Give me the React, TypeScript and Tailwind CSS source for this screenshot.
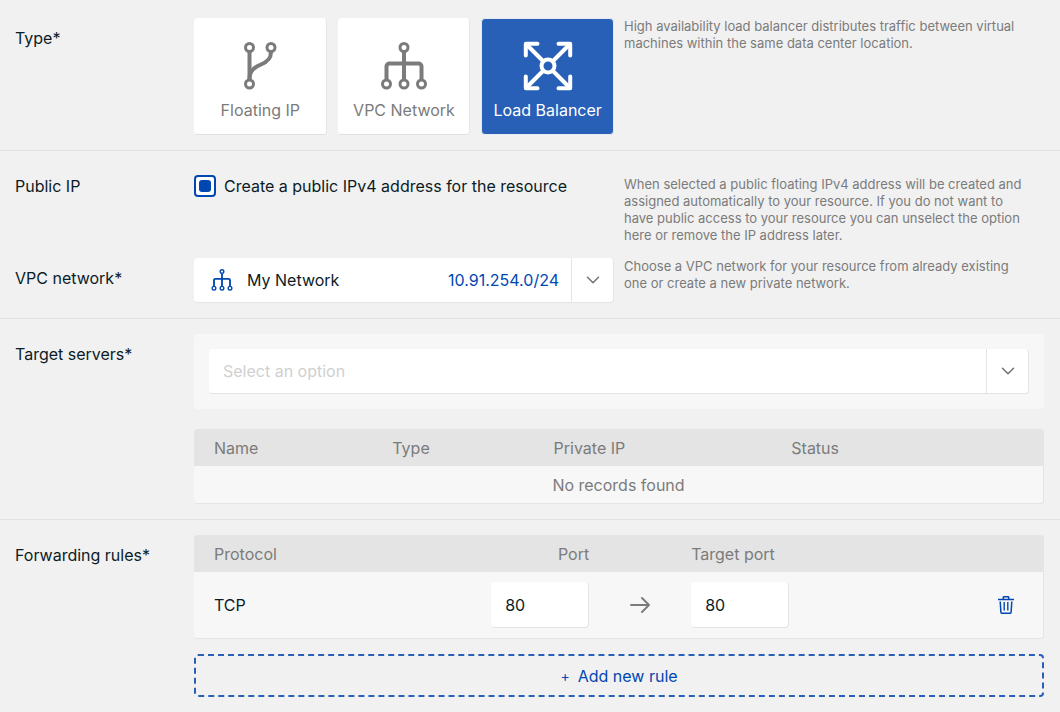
import { useState } from 'react'
import type { ReactNode, SelectHTMLAttributes } from 'react'
import { ChevronDown } from 'lucide-react'
import clsx from 'clsx'

interface IconProps {
  className?: string
}

const FloatingIpIcon = ({ className }: IconProps) => (
  <svg className={className} viewBox="0 0 48 48" fill="none" stroke="currentColor" aria-hidden="true">
    <g strokeWidth="4">
      <path d="M13.5 10v27" />
      <path d="M35 10c0 7-4 10-10 12.5S13.5 28 13.5 37" />
    </g>
    <g strokeWidth="3">
      <circle cx="13.5" cy="5.5" r="4" />
      <circle cx="35" cy="5.5" r="4" />
      <circle cx="13.5" cy="42" r="4" />
    </g>
  </svg>
)

const NetworkIcon = ({ className }: IconProps) => (
  <svg className={className} viewBox="0 0 48 48" fill="none" stroke="currentColor" aria-hidden="true">
    <g strokeWidth="4">
      <path d="M24 10v27" />
      <path d="M6.5 37V24.5a3 3 0 0 1 3-3h29a3 3 0 0 1 3 3V37" />
    </g>
    <g strokeWidth="3">
      <circle cx="24" cy="5.5" r="4" />
      <circle cx="6.5" cy="42" r="4" />
      <circle cx="24" cy="42" r="4" />
      <circle cx="41.5" cy="42" r="4" />
    </g>
  </svg>
)

const LoadBalancerIcon = ({ className }: IconProps) => (
  <svg
    className={className}
    viewBox="0 0 48 48"
    fill="none"
    stroke="currentColor"
    strokeWidth="4"
    strokeLinecap="round"
    strokeLinejoin="round"
    overflow="visible"
    aria-hidden="true"
  >
    <circle cx="24" cy="24" r="6.5" />
    <path d="M13.5 1.8H1.8v11.7M34.5 1.8h11.7v11.7M13.5 46.2H1.8V34.5M34.5 46.2h11.7V34.5" />
    <path d="m3 3 16 16M45 3 29 19M3 45l16-16M45 45 29 29" />
  </svg>
)

const ArrowIcon = () => (
  <svg
    className="h-4 w-5"
    viewBox="0 0 20 16"
    fill="none"
    stroke="currentColor"
    strokeWidth="1.9"
    strokeLinecap="round"
    strokeLinejoin="round"
    aria-hidden="true"
  >
    <path d="M1 8h18M12 1l7 7-7 7" />
  </svg>
)

const TrashIcon = () => (
  <svg className="h-[18px] w-4" viewBox="0 0 16 18" fill="none" stroke="currentColor" aria-hidden="true">
    <path d="M0 3.5h16" strokeWidth="1.6" />
    <path d="M5.3 3V1.4a.6.6 0 0 1 .6-.6h4.2a.6.6 0 0 1 .6.6V3" strokeWidth="1.5" />
    <path d="m2.2 5.5.7 10.8a.9.9 0 0 0 .9.9h8.4a.9.9 0 0 0 .9-.9l.7-10.8" strokeWidth="1.5" />
    <path d="M6.2 6v8.5M9.8 6v8.5" strokeWidth="1.4" />
  </svg>
)

const resourceTypes = [
  { id: 'floating-ip', name: 'Floating IP', Icon: FloatingIpIcon },
  { id: 'vpc', name: 'VPC Network', Icon: NetworkIcon },
  { id: 'load-balancer', name: 'Load Balancer', Icon: LoadBalancerIcon },
]

const Section = ({ children, className = '' }: { children: ReactNode; className?: string }) => (
  <section className={`border-b border-[#e2e2e2] pr-4 pb-[15px] pl-[15px] ${className}`}>{children}</section>
)

const rowStyles = 'grid grid-cols-[169px_minmax(0,1fr)_minmax(0,1fr)] gap-x-[10px] gap-y-[14px]'
const wideRowStyles = 'grid grid-cols-[169px_minmax(0,1fr)] gap-x-[10px]'
const labelStyles = 'block pt-2 text-base'

const Help = ({ children, className = '' }: { children: ReactNode; className?: string }) => (
  <p className={`pr-4 text-[13px] leading-[17px] text-[#7b7b7b] ${className}`}>{children}</p>
)

interface SelectProps extends SelectHTMLAttributes<HTMLSelectElement> {
  icon?: ReactNode
  detail?: string
}

const Select = ({ icon, detail, className = '', children, ...props }: SelectProps) => (
  <div className="flex h-[45px] items-center rounded border-r border-b border-[#e4e4e4] bg-white">
    {icon}
    <select className={`h-full min-w-0 flex-1 appearance-none bg-transparent pl-[14px] outline-none ${className}`} {...props}>
      {children}
    </select>
    {detail && <span className="pr-3 text-[#0047b3]">{detail}</span>}
    <span className="flex h-full w-[42px] items-center justify-center border-l border-[#e4e4e4] text-[#777]">
      <ChevronDown size={22} strokeWidth={1.75} />
    </span>
  </div>
)

const tableStyles =
  'w-full table-fixed border-separate border-spacing-0 overflow-hidden rounded-[3px] border-r border-b border-[#e4e4e4] bg-[#f7f7f7] text-left'
const headStyles = 'h-[37px] bg-[#e4e4e4] text-[#7b7b7b] [&_th]:font-normal'
const portStyles = 'block h-[46px] w-full rounded-sm border-r border-b border-[#e4e4e4] bg-white px-[14px] outline-none'

export default function App() {
  const [type, setType] = useState('load-balancer')
  const [publicIp, setPublicIp] = useState(true)

  return (
    <form className="min-h-screen bg-[#f1f1f1] font-['Inter',sans-serif] text-base text-[#0b1c27]">
      <Section className="pt-[18px]">
        <div className={rowStyles}>
          <span id="type-label" className={labelStyles}>
            Type*
          </span>
          <div role="radiogroup" aria-labelledby="type-label" className="grid grid-cols-3 gap-[11px]">
            {resourceTypes.map(({ id, name, Icon }) => (
              <label
                key={id}
                className={clsx(
                  'relative flex cursor-pointer flex-col items-center gap-2 rounded border pt-[23px] pb-3 whitespace-nowrap',
                  type === id
                    ? 'border-[#e6ebf3] bg-[#2860b7] text-white'
                    : 'border-t-white border-r-[#e6e6e6] border-b-[#e0e0e0] border-l-white bg-white text-[#7b7b7b]'
                )}
              >
                <input
                  type="radio"
                  name="type"
                  className="sr-only"
                  checked={type === id}
                  onChange={() => setType(id)}
                />
                <Icon className="size-12" />
                {name}
              </label>
            ))}
          </div>
          <Help>
            High availability load balancer distributes traffic between virtual machines within the same data center
            location.
          </Help>
        </div>
      </Section>

      <Section className="pt-[15px]">
        <div className={rowStyles}>
          <span className={labelStyles}>Public IP</span>
          <label className="flex items-center gap-2 self-start pt-2">
            <input
              type="checkbox"
              className="grid size-[22px] shrink-0 appearance-none place-content-center rounded border-2 border-[#0047b3] bg-white before:size-3 before:rounded-[3px] checked:before:bg-[#0047b3]"
              checked={publicIp}
              onChange={(e) => setPublicIp(e.target.checked)}
            />
            Create a public IPv4 address for the resource
          </label>
          <Help className="pt-[10px]">
            When selected a public floating IPv4 address will be created and assigned automatically to your resource. If
            you do not want to have public access to your resource you can unselect the option here or remove the IP
            address later.
          </Help>

          <label htmlFor="network" className={labelStyles}>
            VPC network*
          </label>
          <Select
            id="network"
            icon={<NetworkIcon className="ml-[17px] size-[22px] shrink-0 text-[#0047b3]" />}
            detail="10.91.254.0/24"
          >
            <option>My Network</option>
          </Select>
          <Help>
            Choose a VPC network for your resource from already existing one or create a new private network.
          </Help>
        </div>
      </Section>

      <Section className="pt-[15px]">
        <div className={wideRowStyles}>
          <label htmlFor="servers" className={labelStyles}>
            Target servers*
          </label>
          <div className="flex flex-col gap-5">
            <div className="rounded bg-[#f7f7f7] p-[15px]">
              <Select id="servers" className="text-[#d0d0d0]" defaultValue="">
                <option value="">Select an option</option>
              </Select>
            </div>
            <table className={tableStyles}>
              <thead className={headStyles}>
                <tr>
                  <th className="w-[21%] pl-5">Name</th>
                  <th className="w-[19%] pl-5">Type</th>
                  <th className="w-[28%] pl-5">Private IP</th>
                  <th className="pl-5">Status</th>
                </tr>
              </thead>
              <tbody>
                <tr>
                  <td colSpan={4} className="h-[37px] text-center text-[#7b7b7b]">
                    No records found
                  </td>
                </tr>
              </tbody>
            </table>
          </div>
        </div>
      </Section>

      <Section className="pt-[15px]">
        <div className={wideRowStyles}>
          <span className={labelStyles}>Forwarding rules*</span>
          <div className="flex flex-col gap-[15px]">
            <table className={tableStyles}>
              <thead className={headStyles}>
                <tr>
                  <th className="w-[35%] pl-5">Protocol</th>
                  <th className="w-[98px] text-right">Port</th>
                  <th className="w-[102px]" />
                  <th className="w-[98px] whitespace-nowrap">Target port</th>
                  <th />
                </tr>
              </thead>
              <tbody>
                <tr className="h-[66px]">
                  <td className="pl-5">TCP</td>
                  <td>
                    <input type="text" aria-label="Port" defaultValue="80" className={portStyles} />
                  </td>
                  <td className="text-[#7b7b7b]">
                    <div className="flex justify-center">
                      <ArrowIcon />
                    </div>
                  </td>
                  <td>
                    <input type="text" aria-label="Target port" defaultValue="80" className={portStyles} />
                  </td>
                  <td className="pr-[29px]">
                    <button type="button" aria-label="Delete rule" className="ml-auto block text-[#0047b3]">
                      <TrashIcon />
                    </button>
                  </td>
                </tr>
              </tbody>
            </table>
            <button
              type="button"
              className="flex h-[43px] items-center justify-center gap-2 rounded-sm border-2 border-dashed border-[#2860b7] text-[#0047b3]"
            >
              <span className="text-sm">+</span>
              Add new rule
            </button>
          </div>
        </div>
      </Section>
    </form>
  )
}
